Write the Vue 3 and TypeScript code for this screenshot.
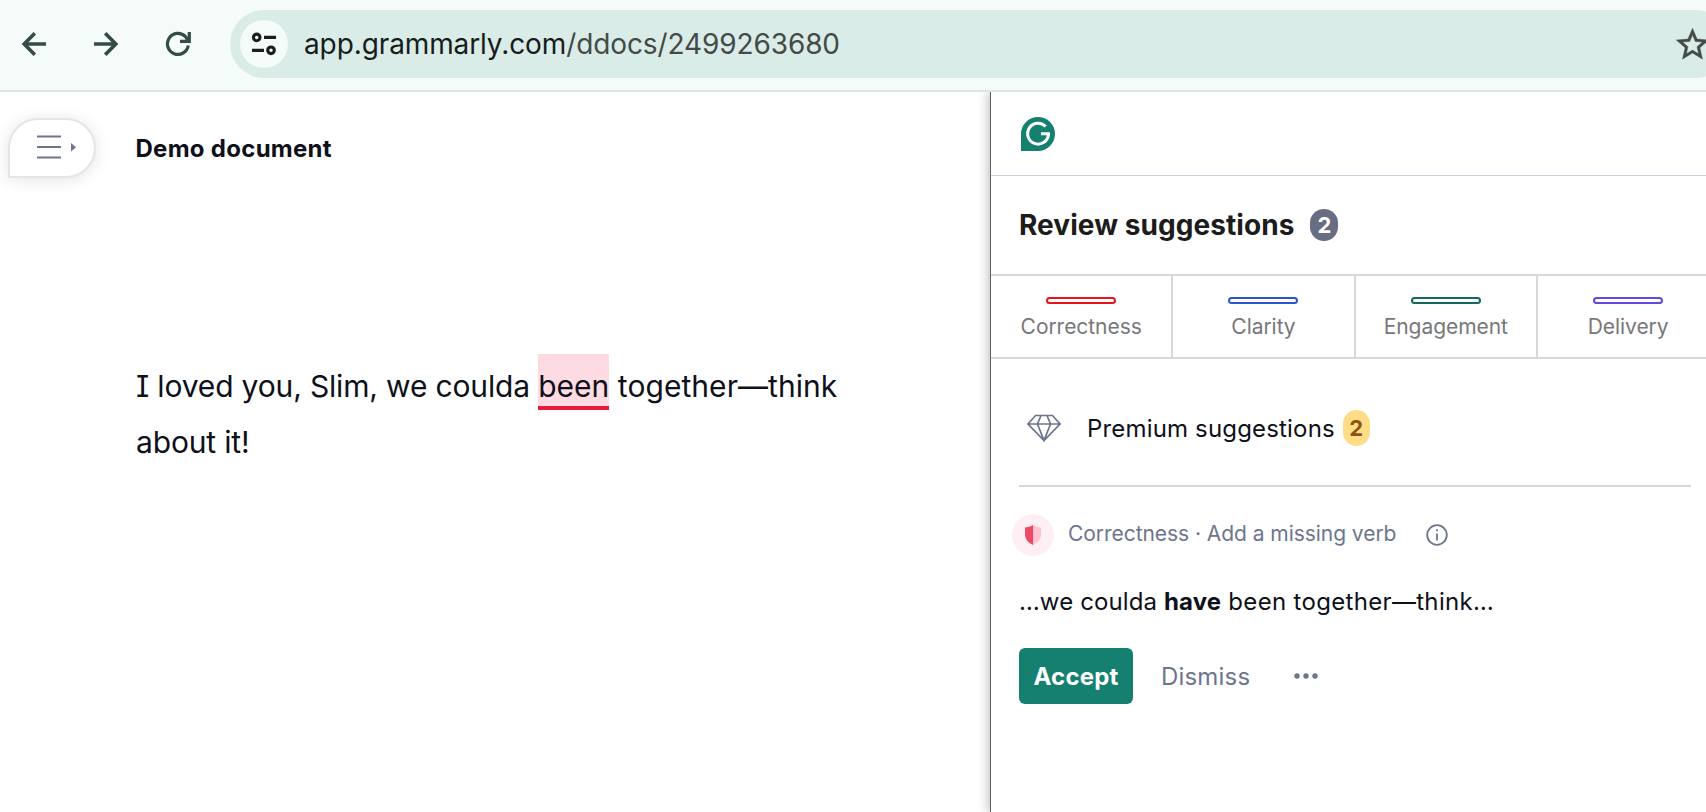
<script setup lang="ts">
interface Category { label: string; tone: string }
const categories: Category[] = [
  { label: 'Correctness', tone: 'red' },
  { label: 'Clarity', tone: 'blue' },
  { label: 'Engagement', tone: 'green' },
  { label: 'Delivery', tone: 'purple' },
]
</script>

<template>
  <div class="window">
    <header class="toolbar">
      <nav class="nav">
        <svg width="26" height="26" viewBox="0 0 26 26"><path d="M25 13H4M13.800 2.300 3.200 13l10.600 10.700" /></svg>
        <svg width="26" height="26" viewBox="0 0 26 26"><path d="M1 13h21M12.200 2.300 22.800 13 12.200 23.700" /></svg>
        <svg class="reload" width="26" height="26" viewBox="0 0 26 26"><path d="M23.300 14.600A10.500 10.500 0 1 1 20.400 5.500L23 9.500M24.300 1v9.300H15" /></svg>
      </nav>
      <div class="address">
        <span class="site">
          <svg width="26" height="26" viewBox="0 0 26 26"><circle cx="5.700" cy="6.400" r="3.300" /><path d="M13 6.400h12M1 19.400h12" /><circle cx="20" cy="19.300" r="3.300" /></svg>
        </span>
        <span class="url">app.grammarly.com<span class="path">/ddocs/2499263680</span></span>
        <svg class="star" width="39" height="39" viewBox="0 0 24 24"><path d="M22 9.240l-7.190-.620L12 2 9.190 8.630 2 9.240l5.460 4.730L5.820 21 12 17.270 18.180 21l-1.630-7.030L22 9.240zM12 15.400l-3.760 2.270 1-4.280-3.320-2.880 4.380-.380L12 6.100l1.710 4.040 4.380.380-3.320 2.880 1 4.280L12 15.400z" /></svg>
      </div>
    </header>
    <div class="workspace">
      <main class="editor">
        <div class="heading">
          <button class="menu" type="button" aria-label="Menu">
            <svg width="42" height="26" viewBox="0 0 42 26"><path d="M1 2.500h24M1 13h24M1 23.500h24" /><path class="caret" d="M35 9l5 4.200-5 4.300z" /></svg>
          </button>
          <h1>Demo document</h1>
        </div>
        <p class="text"><span>I loved you, Slim, we coulda </span><mark>been</mark><span class="rest"> together—think</span><br><span>about it!</span></p>
      </main>
      <aside class="panel">
        <div class="brand">
          <svg width="34" height="34" viewBox="0 0 34 34"><path class="bubble" d="M0 34V17a17 17 0 1 1 17 17z" /><path class="g" d="M24.700 9.600A10.400 10.400 0 1 0 27.400 18M29 16.800H20" /></svg>
        </div>
        <div class="review"><h2>Review suggestions</h2><span class="count">2</span></div>
        <div class="tabs">
          <div v-for="c in categories" :key="c.label" class="tab"><i :class="c.tone" /><span>{{ c.label }}</span></div>
        </div>
        <div class="premium">
          <svg width="34" height="28" viewBox="0 0 34 28"><path d="M1 10 8.500 1.500h17L33 10 17 26.500zM1 10h32M14 1.500 10.500 10 17 26.500 23.500 10 20 1.500" /></svg>
          <span>Premium suggestions</span><b>2</b>
        </div>
        <section class="card">
          <div class="kind">
            <span class="shield"><svg width="16" height="20" viewBox="0 0 16 20"><path class="left" d="M8 0v20C3 17.500 0 14 0 9V2.500Q5 2.300 8 0z" /><path class="right" d="M8 0v20c5-2.500 8-6 8-11V2.500Q11 2.300 8 0z" /></svg></span>
            <span class="reason">Correctness · Add a missing verb</span>
            <svg class="info" width="22" height="22" viewBox="0 0 22 22"><circle cx="11" cy="11" r="9.800" /><path d="M11 9.500v7M11 5.200v2" /></svg>
          </div>
          <p class="sentence"><span>…we coulda </span><strong>have</strong><span class="tail"> been together—think…</span></p>
          <div class="actions">
            <button class="accept" type="button">Accept</button>
            <button class="dismiss" type="button">Dismiss</button>
            <svg width="24" height="8" viewBox="0 0 24 8"><circle cx="3" cy="4" r="2.700" /><circle cx="12" cy="4" r="2.700" /><circle cx="21" cy="4" r="2.700" /></svg>
          </div>
        </section>
      </aside>
    </div>
  </div>
</template>

<style>
body { margin: 0; overflow: hidden; }
</style>

<style scoped>
.window { width: 1706px; height: 812px; overflow: hidden; display: flex; flex-direction: column; font-family: Inter, "Liberation Sans", sans-serif; color: #0e101a; background: #fff; }
.window * { box-sizing: border-box; }
svg { display: block; flex: none; fill: none; }
button { border: 0; padding: 0; background: none; font: inherit; letter-spacing: inherit; }
.toolbar { height: 92px; flex: none; display: flex; align-items: flex-start; background: #f4fbf9; border-bottom: 2px solid #dde6e3; overflow: hidden; }
.nav { display: flex; gap: 46px; width: 230px; padding: 31px 0 0 21px; flex: none; }
.nav svg { stroke: #344b48; stroke-width: 3.6; }
.nav .reload { stroke-width: 3.2; }
.address { width: 1500px; height: 68px; flex: none; margin-top: 10px; padding-left: 10px; border-radius: 34px; display: flex; align-items: center; background: #daece7; }
.site { width: 48px; height: 48px; flex: none; border-radius: 50%; background: #f4fbf9; display: grid; place-items: center; }
.site svg { stroke: #1a1f1e; stroke-width: 3.1; }
.url { margin-left: 16px; font-size: 28px; letter-spacing: -.11px; color: #171d1b; white-space: nowrap; }
.path { color: #434a48; }
.star { margin-left: auto; margin-right: 18px; fill: #434a48; stroke: #434a48; stroke-width: .25; }
.workspace { flex: 1; display: flex; overflow: hidden; }
.editor { width: 990px; flex: none; background: #fff; }
.heading { display: flex; align-items: center; padding: 26px 0 0 8px; }
.menu { width: 88px; height: 60px; border: 2px solid #e5e5e6; border-radius: 30px 30px 30px 0; background: #fff; box-shadow: 0 2px 16px rgba(0,0,0,.11); padding: 0 0 2px 26px; display: flex; align-items: center; }
.menu svg { stroke: #6d758d; stroke-width: 2; }
.menu .caret { fill: #6d758d; stroke: none; }
h1 { margin: 2px 0 0 39.500px; font-size: 24px; font-weight: 700; line-height: 30px; letter-spacing: .28px; }
.text { margin: 180px 0 0 136px; font-size: 30px; line-height: 56px; white-space: nowrap; font-feature-settings: "cv08"; letter-spacing: -.16px; }
.text span { white-space: pre; }
.text .rest { letter-spacing: .06px; }
mark { display: inline-block; height: 56px; margin-top: -4px; line-height: 64px; vertical-align: top; color: inherit; letter-spacing: 0; background: #fedbe3; border-bottom: 4px solid #e81b3d; }
.panel { width: 716px; flex: none; border-left: 1px solid #606063; box-shadow: -2px 0 10px rgba(0,0,0,.25); background: #fff; }
.brand { height: 84px; padding: 25px 0 0 30px; border-bottom: 1px solid #cdcddd; }
.bubble { fill: #15806f; }
.g { stroke: #fff; stroke-width: 3; }
.review { height: 98px; display: flex; align-items: center; padding-left: 28px; gap: 16px; }
h2 { margin: 0; font-size: 28px; font-weight: 700; color: #1c1c1c; letter-spacing: .06px; }
.count { width: 28px; height: 32px; border-radius: 14px; background: #676d82; color: #fff; font-size: 22px; font-weight: 700; line-height: 32px; text-align: center; }
.tabs { height: 85px; display: flex; border-top: 2px solid #d8d8d8; border-bottom: 2px solid #d8d8d8; }
.tab { width: 182.330px; flex: none; border-right: 2px solid #d8d8d8; padding-top: 21px; display: flex; flex-direction: column; align-items: center; gap: 8px; font-size: 21px; line-height: 30px; letter-spacing: -.05px; color: #77777a; }
.tab i { width: 70px; height: 7px; border: 2px solid; border-radius: 4px; }
.tab .red { border-color: #e8131c; }
.tab .blue { border-color: #2c55d4; }
.tab .green { border-color: #136a5c; }
.tab .purple { border-color: #5f4be0; }
.premium { height: 128px; margin: 0 15px 0 28px; padding: 12px 0 0 8px; border-bottom: 2px solid #d8d8d8; display: flex; align-items: center; font-size: 24px; letter-spacing: .17px; }
.premium svg { stroke: #6d758d; stroke-width: 1.700; }
.premium span { margin-left: 26px; }
.premium b { width: 27px; height: 36px; margin-left: 8px; border-radius: 14px; background: #ffdd87; color: #8a5514; font-size: 22px; line-height: 36px; text-align: center; }
.card { padding: 27px 0 0 28px; }
.kind { display: flex; align-items: center; height: 42px; margin-left: -7px; font-size: 21px; letter-spacing: -.05px; color: #6d758d; }
.reason { margin: -3px 0 0 14px; }
.shield { width: 42px; height: 42px; border-radius: 50%; background: #fdeff3; display: grid; place-items: center; }
.left { fill: #ef4766; }
.right { fill: #ffc4d0; }
.info { margin-left: 30px; stroke: #6d758d; stroke-width: 1.800; }
.sentence { margin: 30px 0 0; height: 32px; font-size: 24px; line-height: 32px; letter-spacing: .12px; white-space: pre; }
.tail { letter-spacing: .32px; }
.actions { display: flex; align-items: center; margin-top: 30px; font-size: 24px; letter-spacing: .18px; }
.accept { width: 114px; height: 56px; border-radius: 6px; background: #15806f; color: #fff; font-weight: 700; }
.dismiss { margin: 0 44px 0 28px; color: #6d758d; }
.actions svg { fill: #6d758d; }
</style>
